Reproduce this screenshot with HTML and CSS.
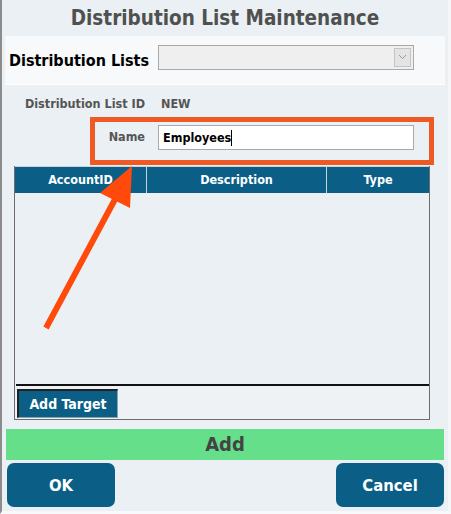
FILE: index.html
```html
<!DOCTYPE html>
<html lang="en">
<head>
  <meta charset="UTF-8" />
  <title>Distribution List Maintenance</title>
  <link rel="stylesheet" href="styles.css">
</head>
<body>
  <div class="window">
    <h1 class="title">Distribution List Maintenance</h1>

    <div class="list-bar">
      <span class="list-label">Distribution Lists</span>
      <div class="select">
        <span class="select-btn">
          <svg width="9" height="6" viewBox="0 0 9 6"><path d="M1 1 L4.5 4.5 L8 1" fill="none" stroke="#999" stroke-width="1"/></svg>
        </span>
      </div>
    </div>

    <div class="details">
      <div class="id-row">
        <span class="field-label id-label">Distribution List ID</span>
        <span class="id-value">NEW</span>
      </div>

      <div class="name-row">
        <span class="field-label name-label">Name</span>
        <div class="name-input">Employees<span class="caret"></span></div>
      </div>

      <div class="targets">
        <div class="targets-head">
          <div class="col col-id">AccountID</div>
          <div class="col col-desc">Description</div>
          <div class="col col-type">Type</div>
        </div>
        <div class="targets-body"></div>
        <div class="targets-foot">
          <button class="add-target">Add Target</button>
        </div>
      </div>
    </div>

    <div class="add-bar">Add</div>

    <div class="actions">
      <button class="action">OK</button>
      <button class="action">Cancel</button>
    </div>

    <svg class="arrow" width="451" height="514" viewBox="0 0 451 514">
      <line x1="46" y1="328" x2="120" y2="190" stroke="#ff4a0c" stroke-width="6"/>
      <polygon points="132,166 130,208 100,193" fill="#ff4a0c"/>
    </svg>
  </div>
</body>
</html>
```

FILE: styles.css
```css
* {
  box-sizing: border-box;
}
body {
  margin: 0;
  font-family: "DejaVu Sans Condensed", "DejaVu Sans", sans-serif;
  font-stretch: semi-condensed;
  background-color: #eaf0f3;
}
.window {
  position: relative;
  width: 451px;
  height: 514px;
  background-color: #eaf0f3;
  border-left: 2px solid #8c8c8c;
  border-right: 3px solid #f4f6f7;
  border-bottom: 3px solid #f8f9fa;
  padding: 0 3px;
}
.title {
  margin: 0;
  height: 36px;
  line-height: 36px;
  text-align: center;
  font-size: 20.5px;
  font-weight: bold;
  color: #505050;
}
.list-bar {
  height: 49px;
  display: flex;
  align-items: center;
  padding-left: 4px;
  background-color: #f7f9fa;
  border-bottom: 1px solid #fff;
}
.list-label {
  width: 149px;
  font-size: 16px;
  font-weight: bold;
  color: #000;
}
.select {
  margin-bottom: 6px;
  width: 256px;
  height: 25px;
  background-color: #efefef;
  border: 1px solid #a9a9a9;
  display: flex;
  justify-content: flex-end;
  align-items: center;
  padding-right: 2px;
}
.select-btn {
  width: 17px;
  height: 19px;
  border: 1px solid #c4c4c4;
  background-color: #e4e4e4;
  display: flex;
  align-items: center;
  justify-content: center;
}
.details {
  padding-top: 9px;
  height: 337px;
}
.field-label {
  font-size: 12.5px;
  font-weight: bold;
  color: #555;
  text-align: right;
}
.id-row {
  display: flex;
  align-items: center;
  height: 18px;
}
.id-label {
  width: 140px;
}
.id-value {
  margin-left: 16px;
  font-size: 12.5px;
  font-weight: bold;
  color: #555;
}
.name-row {
  margin-left: 85px;
  margin-top: 5px;
  width: 344px;
  height: 48px;
  border: 5px solid #ef5a24;
  display: flex;
  align-items: flex-start;
  padding-top: 3px;
}
.name-label {
  width: 50px;
  line-height: 24px;
}
.name-input {
  margin-left: 13px;
  width: 256px;
  height: 25px;
  background-color: #fff;
  border: 1px solid #a9a9a9;
  padding-left: 4px;
  font-size: 12.5px;
  font-weight: bold;
  line-height: 23px;
  color: #000;
  display: flex;
  align-items: center;
}
.caret {
  width: 1px;
  height: 16px;
  background-color: #000;
}
.targets {
  margin-left: 9px;
  margin-top: 1px;
  width: 416px;
  height: 254px;
  border: 1px solid #6d6d6d;
  border-top: none;
  display: flex;
  flex-direction: column;
}
.targets-head {
  display: flex;
  height: 27px;
  background-color: #0b5f87;
  border-top: 1px solid #c9d3d8;
}
.col {
  color: #fff;
  font-size: 12.5px;
  font-weight: bold;
  text-align: center;
  line-height: 25px;
  border-right: 1px solid #c9d3d8;
}
.col-id {
  width: 132px;
}
.col-desc {
  width: 180px;
}
.col-type {
  flex: 1;
  border-right: none;
}
.targets-body {
  flex: 1;
}
.targets-foot {
  height: 35px;
  border-top: 2px solid #111;
  margin-left: 1px;
  padding: 3px 0 0 1px;
  background-color: #eef2f4;
}
.add-target {
  font-family: inherit;
  font-stretch: inherit;
  height: 29px;
  width: 101px;
  background-color: #0b5f87;
  color: #fff;
  font-size: 14px;
  font-weight: bold;
  border: 1px solid #8aa3b0;
  border-left: 2px solid #222;
  border-top: 2px solid #222;
  padding: 0;
  cursor: pointer;
}
.add-bar {
  margin: 7px 1px 0 1px;
  height: 31px;
  line-height: 30px;
  background-color: #65df89;
  text-align: center;
  font-size: 20px;
  font-weight: bold;
  color: #444;
}
.actions {
  margin-top: 3px;
  display: flex;
  justify-content: space-between;
  padding: 0 1px 0 2px;
}
.action {
  font-family: inherit;
  font-stretch: inherit;
  width: 108px;
  height: 44px;
  border: none;
  border-radius: 7px;
  background-color: #0b5f87;
  color: #fff;
  font-size: 16.5px;
  font-weight: bold;
  cursor: pointer;
}
.arrow {
  position: absolute;
  left: -2px;
  top: 0;
  pointer-events: none;
}
```
